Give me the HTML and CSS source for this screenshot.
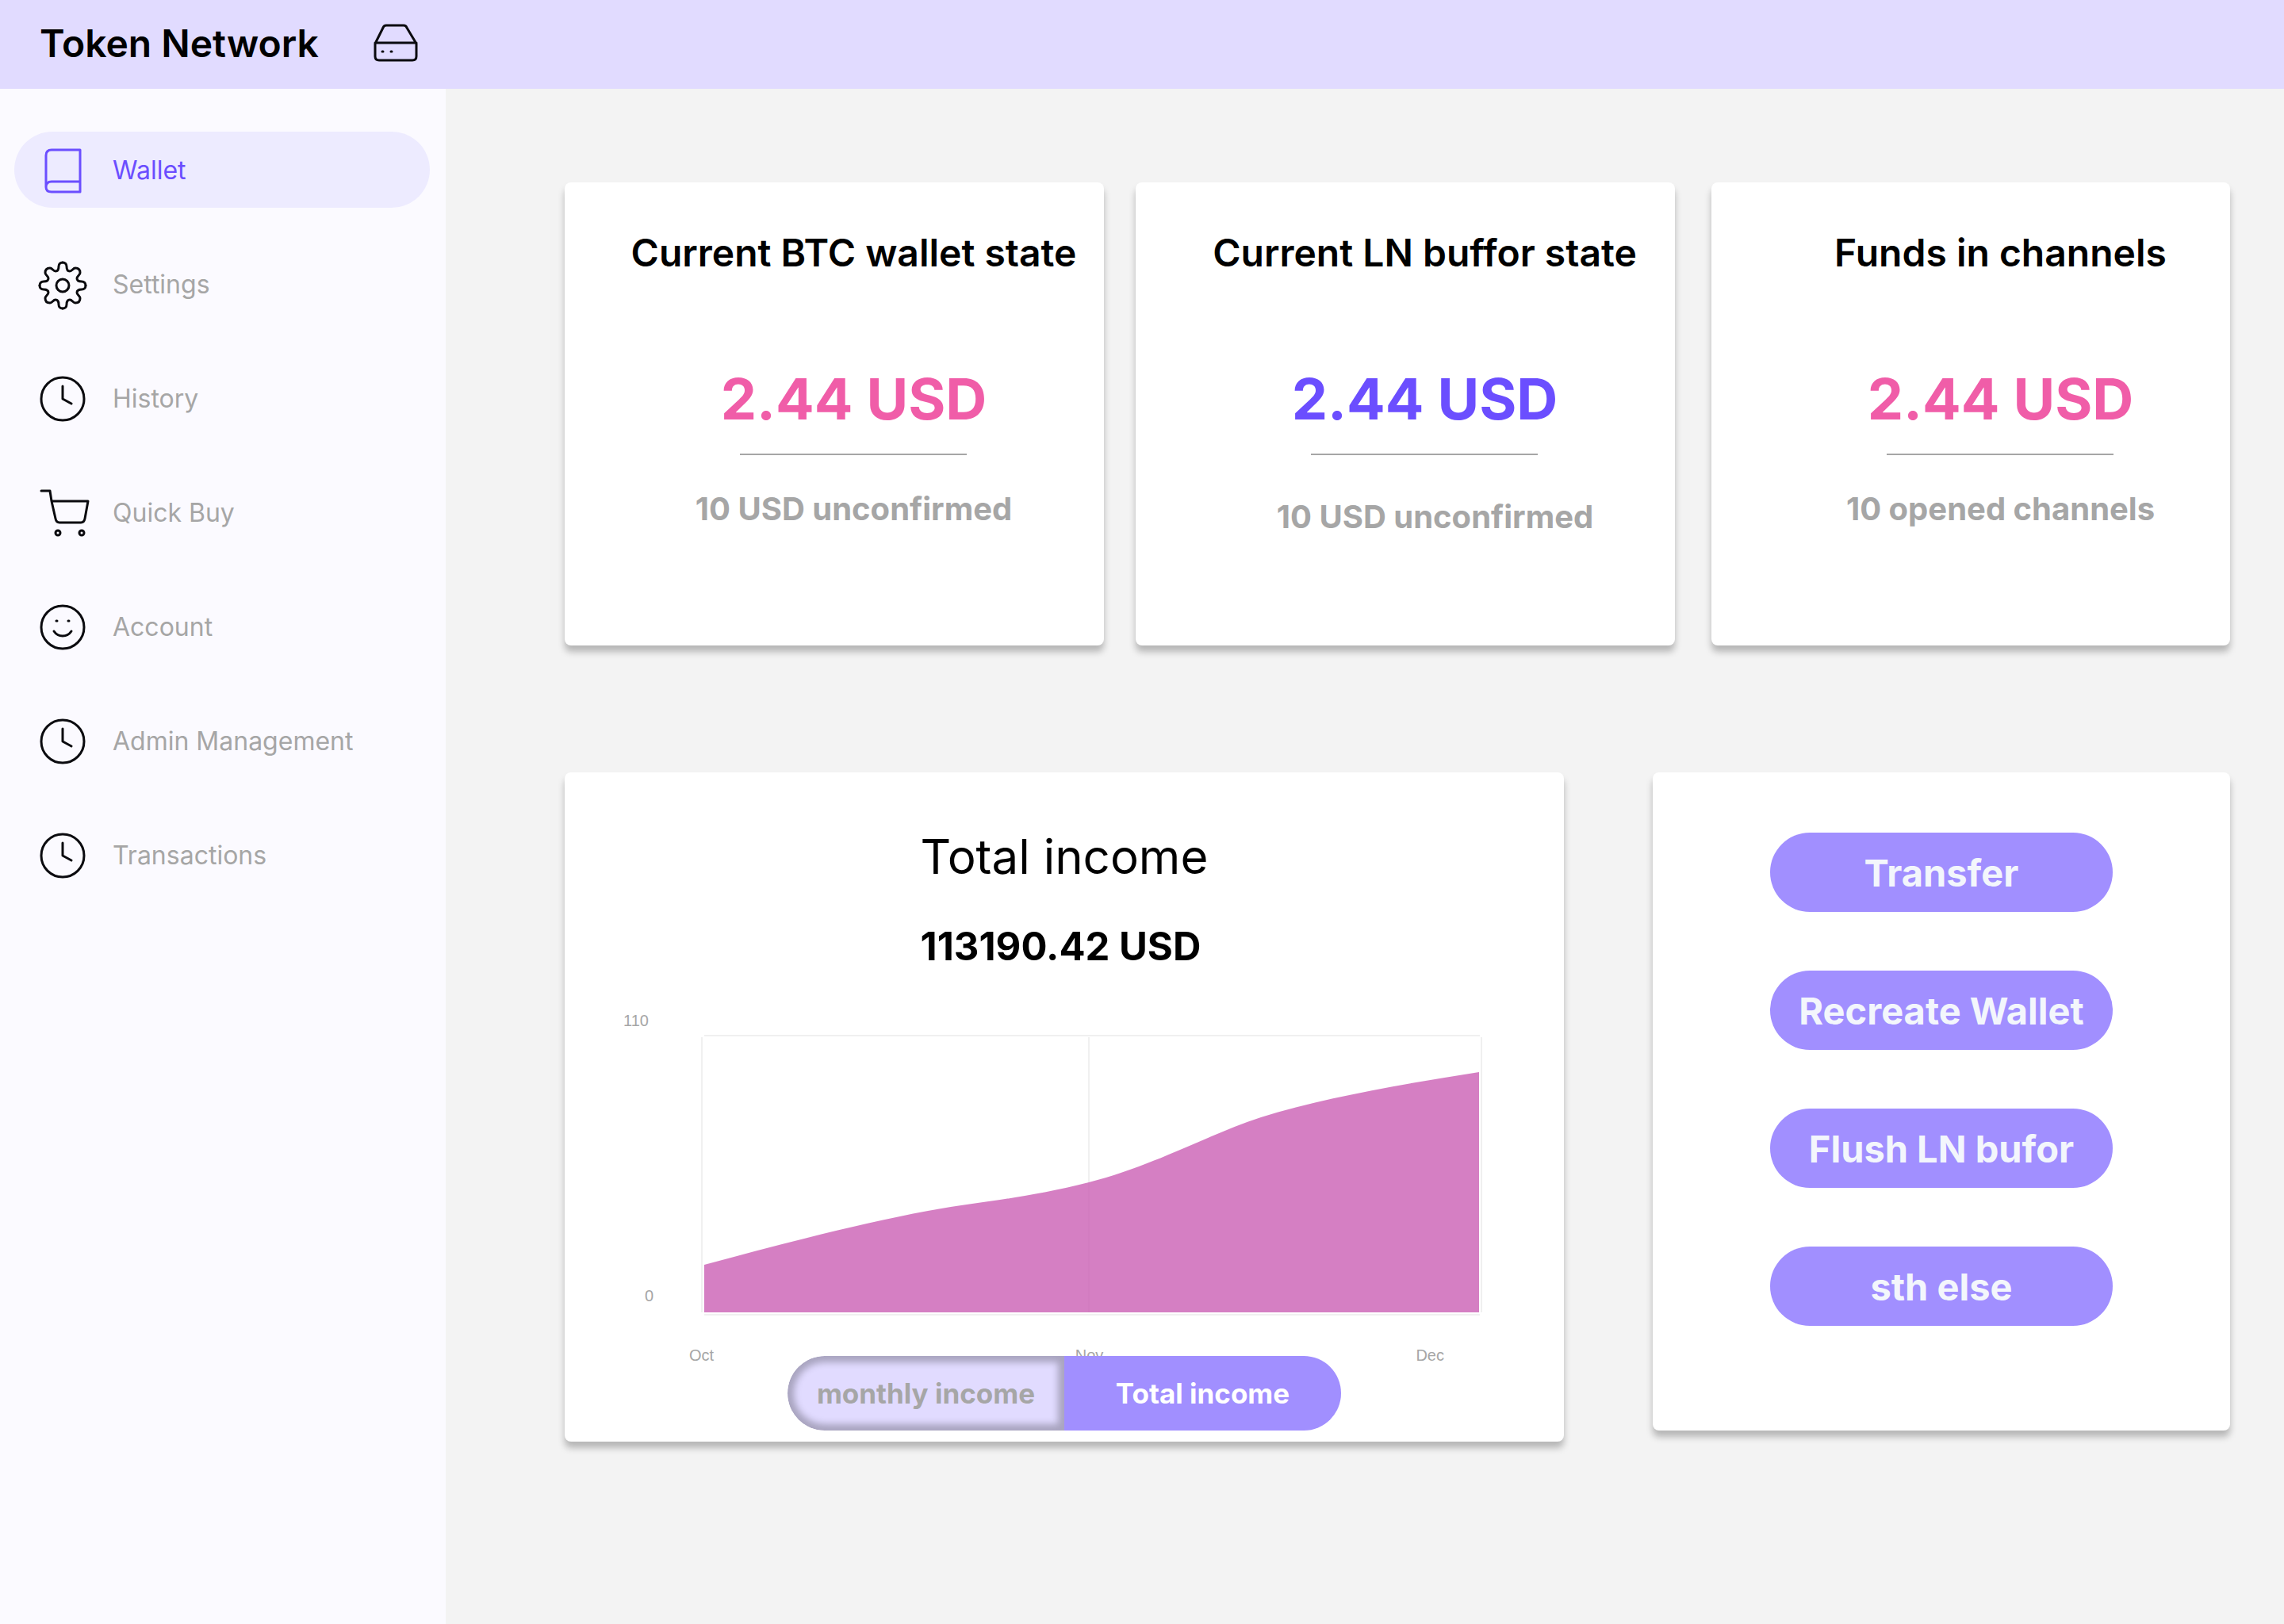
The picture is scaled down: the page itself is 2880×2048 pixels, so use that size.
FILE: index.html
```html
<!DOCTYPE html>
<html lang="en">
<head>
<meta charset="utf-8">
<meta name="viewport" content="width=device-width, initial-scale=1">
<title>Token Network</title>
<link rel="stylesheet" href="styles.css">
</head>
<body>
<svg class="sprite" aria-hidden="true">
  <symbol id="icon-clock" viewBox="0 0 64 64">
    <circle cx="32" cy="32" r="27"/>
    <path d="M32 16V32L43 38"/>
  </symbol>
</svg>
<header class="topbar">
  <h1 class="brand">Token Network</h1>
  <svg class="icon" viewBox="0 0 64 64" aria-hidden="true">
    <path d="M7 32L17 12Q18 9 21 9H43Q46 9 47 12L59 32V48Q59 53 54 53H12Q7 53 7 48ZM7 31H59"/>
    <path d="M16 42h1M27 42h1"/>
  </svg>
</header>
<div class="layout">
  <nav class="sidebar" aria-label="Main">
    <a class="nav-link nav-link--active" href="#wallet" aria-current="page">
      <svg class="icon" viewBox="0 0 64 64" aria-hidden="true">
        <path d="M11 53V13Q11 6 18 6H54V59H18Q11 59 11 53Q11 46 18 46H54"/>
      </svg>
      <span>Wallet</span>
    </a>
    <a class="nav-link" href="#settings">
      <svg class="icon" viewBox="0 0 64 64" aria-hidden="true">
        <g transform="translate(32 33)">
          <circle r="8"/>
          <path id="gear-quarter" d="M0-29C-3-29-5-27-5-24C-5-20-6-18-9-18C-12-18-13-22-16-22C-20-22-22-20-22-16C-22-13-18-12-18-9C-18-6-20-5-24-5C-27-5-29-3-29 0"/>
          <use href="#gear-quarter" transform="rotate(90)"/>
          <use href="#gear-quarter" transform="rotate(180)"/>
          <use href="#gear-quarter" transform="rotate(270)"/>
        </g>
      </svg>
      <span>Settings</span>
    </a>
    <a class="nav-link" href="#history">
      <svg class="icon" aria-hidden="true"><use href="#icon-clock"/></svg>
      <span>History</span>
    </a>
    <a class="nav-link" href="#quick-buy">
      <svg class="icon" viewBox="0 0 64 64" aria-hidden="true">
        <path d="M5 4H16L18 17H64L60 39Q59 44 55 44H28Q24 44 23 39L18 17"/>
        <circle cx="26" cy="57" r="3"/><circle cx="56" cy="57" r="3"/>
      </svg>
      <span>Quick Buy</span>
    </a>
    <a class="nav-link" href="#account">
      <svg class="icon" viewBox="0 0 64 64" aria-hidden="true">
        <circle cx="32" cy="32" r="27"/>
        <path d="M21 37Q25 43 32 43Q39 43 43 37"/>
        <path d="M24 24h1M39 24h1"/>
      </svg>
      <span>Account</span>
    </a>
    <a class="nav-link" href="#admin">
      <svg class="icon" aria-hidden="true"><use href="#icon-clock"/></svg>
      <span>Admin Management</span>
    </a>
    <a class="nav-link" href="#transactions">
      <svg class="icon" aria-hidden="true"><use href="#icon-clock"/></svg>
      <span>Transactions</span>
    </a>
  </nav>
  <main class="content">
    <section class="stats">
      <article class="card stat">
        <h2 class="stat-title">Current BTC wallet state</h2>
        <p class="stat-value">2.44 USD</p>
        <p class="stat-note">10 USD unconfirmed</p>
      </article>
      <article class="card stat stat--buffer">
        <h2 class="stat-title">Current LN buffor state</h2>
        <p class="stat-value">2.44 USD</p>
        <p class="stat-note">10 USD unconfirmed</p>
      </article>
      <article class="card stat stat--channels">
        <h2 class="stat-title">Funds in channels</h2>
        <p class="stat-value">2.44 USD</p>
        <p class="stat-note">10 opened channels</p>
      </article>
    </section>
    <section class="details">
      <article class="card income">
        <div class="income-head">
          <h2 class="income-title">Total income</h2>
          <p class="income-total">113190.42 USD</p>
        </div>
        <div class="chart">
          <div class="y-axis"><span class="y-max">110</span><span>0</span></div>
          <svg class="plot" viewBox="884 1305 985 354" preserveAspectRatio="none" role="img" aria-label="Income from October to December">
            <path class="grid-line" d="M888 1306H1866M888 1658H1866M885 1308V1655M1373 1308V1655M1868 1308V1655"/>
            <path class="area" d="M888 1595C980 1570 1080 1544 1170 1527C1230 1516 1290 1512 1373 1491C1460 1468 1520 1432 1590 1409C1670 1384 1770 1367 1865 1352V1655H888Z"/>
          </svg>
          <div class="x-axis"><span>Oct</span><span>Nov</span><span class="x-last">Dec</span></div>
        </div>
        <div class="toggle">
          <button class="toggle-item toggle-item--pressed" type="button" aria-pressed="true">monthly income</button>
          <button class="toggle-item" type="button" aria-pressed="false">Total income</button>
        </div>
      </article>
      <article class="card actions">
        <button class="action" type="button">Transfer</button>
        <button class="action" type="button">Recreate Wallet</button>
        <button class="action" type="button">Flush LN bufor</button>
        <button class="action" type="button">sth else</button>
      </article>
    </section>
  </main>
</div>
</body>
</html>
```
FILE: styles.css
```css
* {
  box-sizing: border-box;
}

body {
  margin: 0;
  min-height: 100vh;
  display: flex;
  flex-direction: column;
  background: #f3f3f3;
  color: #000;
  font-family: Inter, "Liberation Sans", sans-serif;
}

h1,
h2,
p {
  margin: 0;
}

button {
  border: 0;
  font-family: inherit;
  cursor: pointer;
}

.sprite {
  display: none;
}

.icon {
  width: 64px;
  height: 64px;
  flex: none;
  overflow: visible;
  fill: none;
  stroke: #0b0b0f;
  stroke-width: 3;
  stroke-linecap: round;
  stroke-linejoin: round;
}

.topbar {
  display: flex;
  align-items: center;
  gap: 64px;
  height: 112px;
  padding: 0 50px 2px;
  background: #e1dbff;
}

.brand {
  font-size: 48px;
  font-weight: 600;
  line-height: 60px;
}

.layout {
  flex: 1;
  display: flex;
}

.sidebar {
  flex: none;
  width: 562px;
  display: flex;
  flex-direction: column;
  gap: 48px;
  padding: 54px 20px 54px 18px;
  background: #fbfaff;
}

.nav-link {
  display: flex;
  align-items: center;
  gap: 31px;
  height: 96px;
  padding: 2px 29px 0;
  border-radius: 48px;
  color: #a6a6a6;
  font-size: 32px;
  line-height: 40px;
  text-decoration: none;
}

.nav-link--active {
  background: #edebff;
  color: #6b4eff;
}

.nav-link--active .icon {
  stroke: #6b4eff;
}

.content {
  flex: 1;
  min-width: 0;
  padding: 118px 68px 118px 150px;
}

.card {
  background: #fff;
  border-radius: 8px;
  box-shadow: 0 8px 8px rgba(0, 0, 0, 0.25);
}

.stats {
  display: grid;
  grid-template-columns: 680fr 680fr 660fr;
  gap: 40px;
}

.stat {
  display: flex;
  flex-direction: column;
  align-items: center;
  min-height: 584px;
  padding: 59px 0 59px 49px;
}

.stat-title {
  font-size: 48px;
  font-weight: 600;
  line-height: 60px;
}

.stat-value {
  margin-top: 108px;
  color: #f05da8;
  font-size: 72px;
  font-weight: 700;
  line-height: 92px;
}

.stat-value::after {
  content: "";
  display: block;
  width: 286px;
  height: 2px;
  margin: 23px auto 0;
  background: #a6a6a6;
}

.stat-note {
  margin-top: 44px;
  color: #a6a6a6;
  font-size: 40px;
  font-weight: 700;
  line-height: 48px;
}

.stat--buffer .stat-value {
  color: #6b4eff;
}

.stat--buffer .stat-note {
  margin-top: 54px;
  padding-left: 26px;
}

.stat--channels {
  margin-left: 6px;
  padding-left: 75px;
}

.details {
  display: grid;
  grid-template-columns: 1260fr 728fr;
  gap: 112px;
  align-items: start;
  margin-top: 160px;
}

.income {
  display: flex;
  flex-direction: column;
  align-items: center;
  padding: 70px 0 14px;
}

.income-title {
  font-size: 60px;
  font-weight: 400;
  line-height: 72px;
}

.income-total {
  margin-top: 48px;
  font-size: 49px;
  font-weight: 700;
  line-height: 60px;
}

.chart {
  align-self: stretch;
  display: grid;
  grid-template-columns: 100px 1fr;
  grid-template-rows: 410px 24px;
  gap: 37px 0;
  padding: 0 103px 0 72px;
  margin-top: 26px;
  color: #a6a6a6;
  font-family: "Liberation Sans", Arial, sans-serif;
  font-size: 20px;
  line-height: 24px;
}

.y-axis {
  display: flex;
  flex-direction: column;
  justify-content: space-between;
  padding: 25px 60px 14px 0;
  text-align: right;
}

.y-max {
  padding-right: 6px;
}

.plot {
  width: 100%;
  height: 354px;
  margin-top: 55px;
  display: block;
}

.grid-line {
  fill: none;
  stroke: #f0f0f0;
  stroke-width: 2;
}

.area {
  fill: #ca5fb4;
  fill-opacity: 0.8;
}

/* Reaches past the plot so the middle label centres on its grid line. */
.x-axis {
  grid-column: 2;
  display: grid;
  grid-template-columns: 1fr auto 1fr;
  margin: 0 -9px 0 -15px;
}

.x-last {
  padding-right: 57px;
  text-align: right;
}

.toggle {
  position: relative;
  display: flex;
  width: 698px;
  height: 94px;
  margin-top: -11px;
  border-radius: 47px;
  overflow: hidden;
}

.toggle-item {
  flex: 1;
  padding: 0;
  background: #a18fff;
  color: #fff;
  font-size: 35px;
  font-weight: 700;
  line-height: 44px;
}

.toggle-item--pressed {
  background: #e1dbff;
  border-radius: 47px 0 0 47px;
  box-shadow: inset 0 0 8px 8px rgba(0, 0, 0, 0.25);
  color: #a6a6a6;
}

.actions {
  display: flex;
  flex-direction: column;
  align-items: center;
  gap: 74px;
  min-height: 830px;
  padding: 76px 0;
}

.action {
  width: 432px;
  height: 100px;
  padding: 2px 0 0;
  border-radius: 50px;
  background: #a18fff;
  color: #f3f6fc;
  font-size: 47px;
  font-weight: 700;
  line-height: 60px;
}
```
